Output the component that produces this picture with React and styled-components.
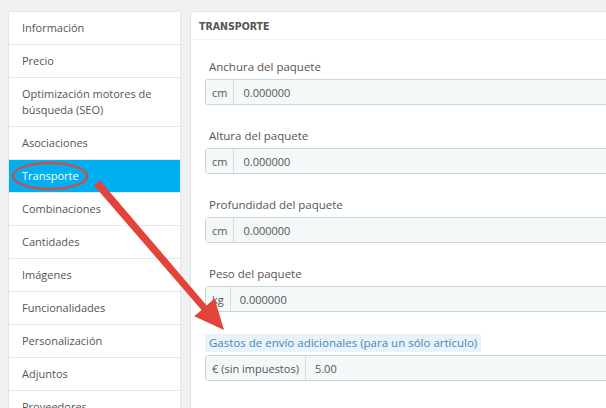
import React from "react";
import styled, { createGlobalStyle } from "styled-components";

const GlobalStyle = createGlobalStyle`
  html, body {
    margin: 0;
    padding: 0;
    background: #eff1f2;
    overflow: hidden;
    font-family: "Open Sans", "Liberation Sans", sans-serif;
  }
`;

const Page = styled.div`
  position: relative;
  display: flex;
  align-items: flex-start;
  gap: 9px;
  padding: 11px 0 0 8px;
  width: 800px;
  height: 408px;
  box-sizing: border-box;
`;

const Sidebar = styled.div`
  width: 173px;
  flex-shrink: 0;
  background: #fff;
  border: 1px solid #e3e6e8;
  border-radius: 3px;
  box-sizing: border-box;
`;

const NavItem = styled.div`
  padding: 8px 13px;
  font-size: 11px;
  line-height: 16px;
  color: ${(p) => (p.$active ? "#fff" : "#555")};
  background: ${(p) => (p.$active ? "#00aff0" : "#fff")};
  border-bottom: 1px solid #e6e8ea;
`;

const Panel = styled.div`
  flex: 1;
  background: #fff;
  border: 1px solid #e3e6e8;
  border-radius: 5px;
  min-height: 420px;
`;

const PanelHeader = styled.div`
  height: 27px;
  padding: 0 8px;
  display: flex;
  align-items: center;
  font-family: "DejaVu Sans Condensed", "Liberation Sans", sans-serif;
  font-weight: bold;
  font-size: 10.5px;
  color: #555;
  border-bottom: 1px solid #eef0f1;
`;

const PanelBody = styled.div`
  padding: 18px 0 0 14px;
`;

const FormGroup = styled.div`
  margin-bottom: 22px;
`;

const Label = styled.div`
  width: fit-content;
  height: 18px;
  line-height: 18px;
  padding: 0 4px;
  margin-bottom: 3px;
  font-size: 11.5px;
  color: ${(p) => (p.$hint ? "#3b8ac0" : "#555")};
  background: ${(p) => (p.$hint ? "#e9f3f9" : "transparent")};
`;

const InputGroup = styled.div`
  display: flex;
  height: 26px;
  box-sizing: border-box;
  border: 1px solid #c7d6db;
  border-radius: 3px;
  background: #f5f8f9;
  font-size: 11px;
  color: #555;
`;

const Addon = styled.div`
  display: flex;
  align-items: center;
  padding: 0 6px;
  border-right: 1px solid #d4dee2;
  background: #f5f8f9;
`;

const Value = styled.div`
  display: flex;
  align-items: center;
  padding: 0 9px;
`;

const Overlay = styled.svg`
  position: absolute;
  left: 0;
  top: 0;
  pointer-events: none;
`;

const navItems = [
  "Información",
  "Precio",
  "Optimización motores de búsqueda (SEO)",
  "Asociaciones",
  "Transporte",
  "Combinaciones",
  "Cantidades",
  "Imágenes",
  "Funcionalidades",
  "Personalización",
  "Adjuntos",
  "Proveedores",
];

const fields = [
  { label: "Anchura del paquete", unit: "cm", value: "0.000000" },
  { label: "Altura del paquete", unit: "cm", value: "0.000000" },
  { label: "Profundidad del paquete", unit: "cm", value: "0.000000" },
  { label: "Peso del paquete", unit: "kg", value: "0.000000" },
  {
    label: "Gastos de envío adicionales (para un sólo artículo)",
    unit: "€ (sin impuestos)",
    value: "5.00",
    hint: true,
  },
];

const App = () => {
  return (
    <Page>
      <GlobalStyle />
      <Sidebar>
        {navItems.map((item) => (
          <NavItem key={item} $active={item === "Transporte"}>
            {item}
          </NavItem>
        ))}
      </Sidebar>
      <Panel>
        <PanelHeader>TRANSPORTE</PanelHeader>
        <PanelBody>
          {fields.map((f) => (
            <FormGroup key={f.label}>
              <Label $hint={f.hint}>{f.label}</Label>
              <InputGroup>
                <Addon>{f.unit}</Addon>
                <Value>{f.value}</Value>
              </InputGroup>
            </FormGroup>
          ))}
        </PanelBody>
      </Panel>
      {/* annotation: red circle + arrow */}
      <Overlay width="606" height="408" viewBox="0 0 606 408">
        <ellipse
          cx="50"
          cy="176"
          rx="37"
          ry="13"
          fill="none"
          stroke="#c9504c"
          strokeWidth="2.5"
        />
        <polygon
          points="94,185.6 100,180.4 206.6,305.4 214.6,298.4 224,330 194.2,316.2 201.6,310"
          fill="#e4433b"
        />
      </Overlay>
    </Page>
  );
};

export default App;
